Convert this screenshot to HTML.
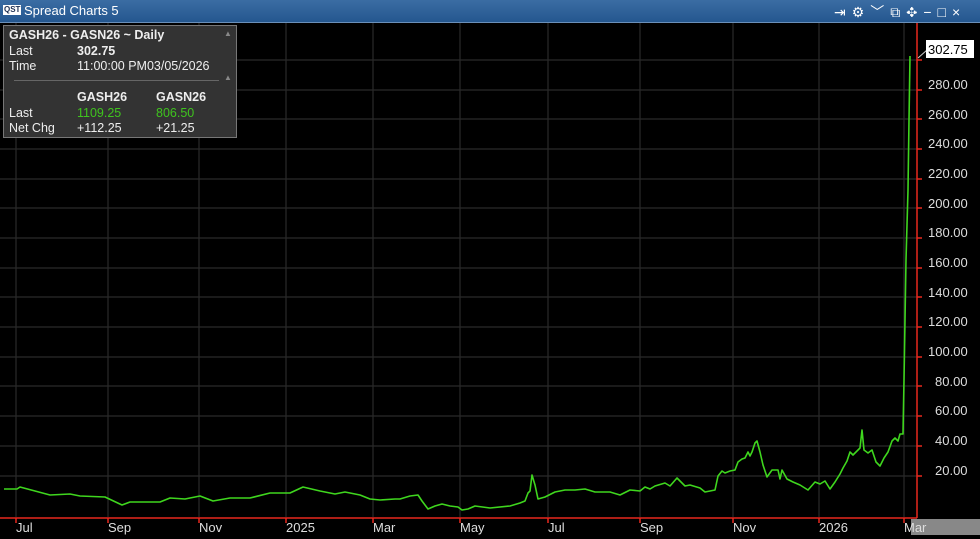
<!DOCTYPE html>
<html><head><meta charset="utf-8"><style>
html,body{margin:0;padding:0;background:#000;width:980px;height:539px;overflow:hidden;font-family:"Liberation Sans",sans-serif;}
.title{position:absolute;left:0;top:0;width:980px;height:22px;background:linear-gradient(#3b6da3,#24578f);border-bottom:1px solid #6b8fb8;color:#fff;font-size:13px;}
.tip{position:absolute;left:3px;top:25px;width:232px;height:111px;background:#333;border:1px solid #777;color:#eee;font-size:12.5px;font-weight:bold;}
.tip div{position:absolute;white-space:nowrap}
.ax{position:absolute;color:#ddd;font-size:13px;}
</style></head><body>
<div class="title">
<span style="position:absolute;left:3px;top:5px;font-size:8px;font-weight:bold;background:#fff;color:#235;padding:0 1px;line-height:10px">QST</span>
<span style="position:absolute;left:24px;top:3px">Spread Charts 5</span>
<span style="position:absolute;left:834px;top:2px;font-size:14px;letter-spacing:6px">⇥⚙︎﹀⧉✥−□×</span>
</div>
<svg width="980" height="539" style="position:absolute;left:0;top:0">
<g stroke="#2a2a2a" stroke-width="1.2">
<line x1="16" y1="23" x2="16" y2="517"/><line x1="108" y1="23" x2="108" y2="517"/><line x1="199" y1="23" x2="199" y2="517"/><line x1="286" y1="23" x2="286" y2="517"/><line x1="373" y1="23" x2="373" y2="517"/><line x1="460" y1="23" x2="460" y2="517"/><line x1="548" y1="23" x2="548" y2="517"/><line x1="640" y1="23" x2="640" y2="517"/><line x1="733" y1="23" x2="733" y2="517"/><line x1="819" y1="23" x2="819" y2="517"/><line x1="904" y1="23" x2="904" y2="517"/>
<line x1="0" y1="60" x2="917" y2="60"/><line x1="0" y1="90" x2="917" y2="90"/><line x1="0" y1="119" x2="917" y2="119"/><line x1="0" y1="149" x2="917" y2="149"/><line x1="0" y1="179" x2="917" y2="179"/><line x1="0" y1="208" x2="917" y2="208"/><line x1="0" y1="238" x2="917" y2="238"/><line x1="0" y1="268" x2="917" y2="268"/><line x1="0" y1="297" x2="917" y2="297"/><line x1="0" y1="327" x2="917" y2="327"/><line x1="0" y1="357" x2="917" y2="357"/><line x1="0" y1="386" x2="917" y2="386"/><line x1="0" y1="416" x2="917" y2="416"/><line x1="0" y1="446" x2="917" y2="446"/><line x1="0" y1="476" x2="917" y2="476"/>
</g>
<g stroke="#e8281e" stroke-width="1.5">
<line x1="917" y1="23" x2="917" y2="518"/><line x1="0" y1="518" x2="917" y2="518"/>
<line x1="16" y1="518" x2="16" y2="523"/><line x1="108" y1="518" x2="108" y2="523"/><line x1="199" y1="518" x2="199" y2="523"/><line x1="286" y1="518" x2="286" y2="523"/><line x1="373" y1="518" x2="373" y2="523"/><line x1="460" y1="518" x2="460" y2="523"/><line x1="548" y1="518" x2="548" y2="523"/><line x1="640" y1="518" x2="640" y2="523"/><line x1="733" y1="518" x2="733" y2="523"/><line x1="819" y1="518" x2="819" y2="523"/><line x1="904" y1="518" x2="904" y2="523"/>
<line x1="917" y1="60" x2="922" y2="60"/><line x1="917" y1="90" x2="922" y2="90"/><line x1="917" y1="119" x2="922" y2="119"/><line x1="917" y1="149" x2="922" y2="149"/><line x1="917" y1="179" x2="922" y2="179"/><line x1="917" y1="208" x2="922" y2="208"/><line x1="917" y1="238" x2="922" y2="238"/><line x1="917" y1="268" x2="922" y2="268"/><line x1="917" y1="297" x2="922" y2="297"/><line x1="917" y1="327" x2="922" y2="327"/><line x1="917" y1="357" x2="922" y2="357"/><line x1="917" y1="386" x2="922" y2="386"/><line x1="917" y1="416" x2="922" y2="416"/><line x1="917" y1="446" x2="922" y2="446"/><line x1="917" y1="476" x2="922" y2="476"/>
</g>
<polyline fill="none" stroke="#3fd61e" stroke-width="1.6" stroke-linejoin="round" points="4,489 17,489 20,487 35,491 50,495 70,494 80,496 105,497 122,505 130,502 145,502 160,502 170,498 185,499 200,496 213,501 230,498 250,498 270,493 290,493 303,487 320,491 335,494 345,492 360,495 370,499 380,500 395,499 400,499 410,496 418,495 422,501 428,509 435,506 442,504 450,506 458,507 462,510 468,509 475,506 490,508 510,506 520,503 525,501 528,493 530,491 532,475 535,485 538,499 545,497 555,492 565,490 575,490 585,489 595,492 610,492 620,495 630,490 640,491 645,487 650,489 655,486 665,483 670,486 677,478 685,486 690,485 700,488 705,492 715,490 718,476 722,471 725,473 730,471 735,470 738,462 742,459 745,458 748,452 750,456 752,452 755,443 757,441 760,452 763,465 767,477 772,470 778,470 780,479 782,470 787,479 793,482 800,485 808,490 815,482 820,484 825,481 830,489 835,482 840,474 843,468 847,461 850,452 853,455 857,451 860,448 862,430 864,450 868,453 872,450 876,462 880,466 884,458 888,452 892,441 895,438 898,441 900,434 903,434 904,380 906,260 908,190 909,120 910,56"/>
<line x1="918" y1="58" x2="927" y2="50" stroke="#ccc"/>
<rect x="926" y="40" width="48" height="18" fill="#fff"/>
<text x="928" y="54" font-family="Liberation Sans" font-size="13" fill="#000">302.75</text>
<rect x="911" y="519" width="69" height="16" fill="#888"/>
</svg>
<div class="ax" style="left:928px;top:77px">280.00</div>
<div class="ax" style="left:928px;top:107px">260.00</div>
<div class="ax" style="left:928px;top:136px">240.00</div>
<div class="ax" style="left:928px;top:166px">220.00</div>
<div class="ax" style="left:928px;top:196px">200.00</div>
<div class="ax" style="left:928px;top:225px">180.00</div>
<div class="ax" style="left:928px;top:255px">160.00</div>
<div class="ax" style="left:928px;top:285px">140.00</div>
<div class="ax" style="left:928px;top:314px">120.00</div>
<div class="ax" style="left:928px;top:344px">100.00</div>
<div class="ax" style="left:935px;top:374px">80.00</div>
<div class="ax" style="left:935px;top:403px">60.00</div>
<div class="ax" style="left:935px;top:433px">40.00</div>
<div class="ax" style="left:935px;top:463px">20.00</div>
<div class="ax" style="left:16px;top:520px">Jul</div>
<div class="ax" style="left:108px;top:520px">Sep</div>
<div class="ax" style="left:199px;top:520px">Nov</div>
<div class="ax" style="left:286px;top:520px">2025</div>
<div class="ax" style="left:373px;top:520px">Mar</div>
<div class="ax" style="left:460px;top:520px">May</div>
<div class="ax" style="left:548px;top:520px">Jul</div>
<div class="ax" style="left:640px;top:520px">Sep</div>
<div class="ax" style="left:733px;top:520px">Nov</div>
<div class="ax" style="left:819px;top:520px">2026</div>
<div class="ax" style="left:904px;top:520px">Mar</div>
<div class="tip">
<div style="left:5px;top:2px">GASH26 - GASN26 ~ Daily</div>
<div style="left:5px;top:18px;font-weight:normal">Last</div><div style="left:73px;top:18px">302.75</div>
<div style="left:5px;top:33px;font-weight:normal">Time</div><div style="left:73px;top:33px;font-weight:normal">11:00:00 PM03/05/2026</div>
<div style="left:10px;top:54px;width:205px;height:1px;background:#666"></div>
<div style="left:220px;top:3px;font-size:8px;color:#888">▲</div>
<div style="left:220px;top:47px;font-size:8px;color:#888">▲</div>
<div style="left:73px;top:64px">GASH26</div><div style="left:152px;top:64px">GASN26</div>
<div style="left:5px;top:80px;font-weight:normal">Last</div><div style="left:73px;top:80px;color:#3fc41e;font-weight:normal">1109.25</div><div style="left:152px;top:80px;color:#3fc41e;font-weight:normal">806.50</div>
<div style="left:5px;top:95px;font-weight:normal">Net Chg</div><div style="left:73px;top:95px;font-weight:normal">+112.25</div><div style="left:152px;top:95px;font-weight:normal">+21.25</div>
</div>
</body></html>
